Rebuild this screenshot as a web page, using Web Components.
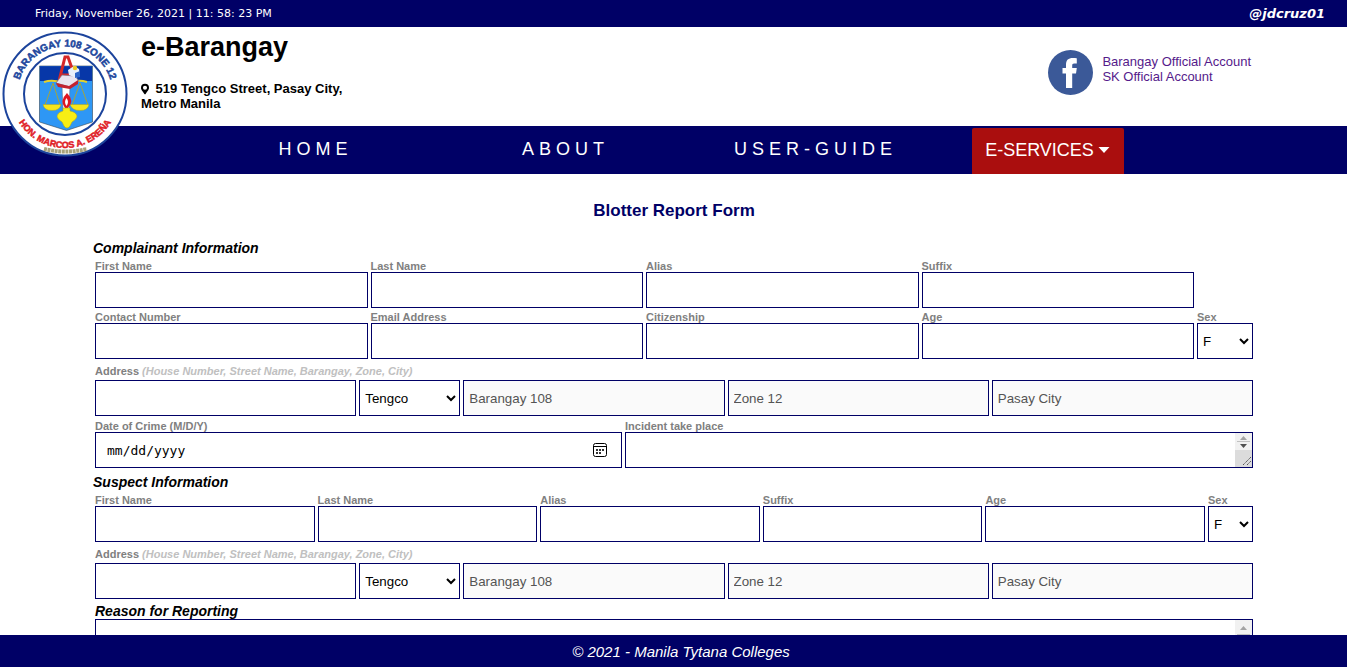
<!DOCTYPE html>
<html lang="en-US">
<head>
<meta charset="utf-8">
<title>e-Barangay - Blotter Report Form</title>
<style>
  body { margin: 0; background: #fff; color: #000; font-family: "Liberation Sans", Arial, sans-serif; }
</style>
</head>
<body>
<barangay-app></barangay-app>

<template id="tpl-app">
  <style>
    :host { display: flex; flex-direction: column; height: 100vh; }
    main { flex: 1; min-height: 0; overflow-y: auto; scrollbar-width: none; }
  </style>
  <top-bar>
    <time slot="date" datetime="2021-11-26T23:58:23">Friday, November 26, 2021 | 11: 58: 23 PM</time>
    <span slot="user">@jdcruz01</span>
  </top-bar>
  <site-header></site-header>
  <site-nav></site-nav>
  <main><blotter-form></blotter-form></main>
  <site-footer>© 2021 - Manila Tytana Colleges</site-footer>
</template>

<template id="tpl-topbar">
  <style>
    :host { display: flex; flex: none; justify-content: space-between; align-items: center; height: 27px; padding: 0 22px 0 35px; background: #006; color: #fff; font: 11px/15px "DejaVu Sans", Verdana, sans-serif; }
    a { color: inherit; text-decoration: none; font-size: 13px; font-weight: bold; font-style: italic; }
  </style>
  <slot name="date"></slot>
  <a href="#profile"><slot name="user"></slot></a>
</template>

<template id="tpl-header">
  <style>
    :host { display: flex; flex: none; justify-content: space-between; position: relative; z-index: 1; height: 99px; padding: 0 91px 0 141px; box-sizing: border-box; }
    barangay-seal { position: absolute; left: 2px; top: 4px; }
    h1 { margin: 5px 0 18px; font-size: 27px; line-height: 31px; }
    address { font-style: normal; font-weight: bold; font-size: 13px; line-height: 15px; width: 212px; }
    .pin { width: 8px; height: 12px; margin-right: 3px; vertical-align: -2px; }
    .social { display: flex; gap: 9px; padding: 23px 5px 0 0; font-size: 13px; line-height: 15px; }
    .social svg { width: 45px; height: 45px; }
    .links { display: flex; flex-direction: column; padding-top: 4px; }
    .links a { color: #551a8b; text-decoration: none; }
  </style>
  <barangay-seal></barangay-seal>
  <div>
    <h1>e-Barangay</h1>
    <address><svg class="pin" viewBox="0 0 384 512" aria-hidden="true"><path fill-rule="evenodd" d="M172 502C27 291 0 269 0 192a192 192 0 0 1 384 0c0 77-27 99-172 310-10 13-30 13-40 0zM192 290a98 98 0 1 0 0-196 98 98 0 0 0 0 196z"/></svg> 519 Tengco Street, Pasay City, Metro Manila</address>
  </div>
  <div class="social">
    <svg viewBox="0 0 45 45" aria-hidden="true"><circle cx="22.5" cy="22.5" r="22.5" fill="#3b5998"/><path fill="#fff" d="M18 38V23.500h-3.500V18H18v-3.200c0-4.800 2.400-6.800 6.800-6.800 1.800 0 3.200.1 4 .3v5.200h-2.600c-1.600 0-2 .8-2 2.200V18h4.600l-.8 5.500h-3.800V38z"/></svg>
    <div class="links"><a href="#barangay">Barangay Official Account</a><a href="#sk">SK Official Account</a></div>
  </div>
</template>

<template id="tpl-seal">
  <style>
    :host { display: block; width: 126px; height: 126px; }
    svg { display: block; width: 100%; height: 100%; }
    text { font-family: "Liberation Sans Narrow", "Liberation Sans", sans-serif; font-weight: bold; }
  </style>
  <svg viewBox="0 0 126 126" role="img" aria-label="Seal of Barangay 108 Zone 12">
    <defs>
      <path id="top" d="M15.500 63a47.500 47.500 0 0 1 95 0"/>
      <path id="bottom" d="M9 63a54 54 0 0 0 108 0"/>
    </defs>
    <circle cx="63" cy="63" r="61.500" fill="#fff" stroke="#1c449c" stroke-width="2"/>
    <circle cx="63" cy="63" r="41" fill="#fff" stroke="#1c449c" stroke-width="2"/>
    <text font-size="10" fill="#21479d" stroke="#21479d" stroke-width=".5" text-anchor="middle"><textPath href="#top" startOffset="50%">BARANGAY 108 ZONE 12</textPath></text>
    <text font-size="9" fill="#e01c26" stroke="#e01c26" stroke-width=".5" text-anchor="middle"><textPath href="#bottom" startOffset="50%">HON. MARCOS A. EREÑA</textPath></text>
    <path d="M42 118q21 5 43 0" fill="none" stroke="#a9a27a" stroke-width="4" stroke-dasharray="3 .6"/>
    <path d="M37.500 35h53v56l-26 8.500-27-8.500z" fill="#2e97f5" stroke="#345" stroke-width=".6"/>
    <path d="M38 35.300h52V50H38z" fill="#0737a8"/>
    <path d="M60 54h8l-1 25h-6z" fill="#fff" stroke="#567" stroke-width=".5"/>
    <path d="M42 51q9-3 18 1M85 51q-9-3-17 1" fill="none" stroke="#e3d12c" stroke-width="2"/>
    <path d="M51 52l-8 22M51 52l7 22M78 52l-8 22M78 52l8 22" fill="none" stroke="#a5a53c" stroke-width="1"/>
    <path d="M41 73.500h18q-1 6-9 6t-9-6zM68 73.500h19q-1 6-9 6t-10-6z" fill="#f6e51c" stroke="#a99a10" stroke-width=".4"/>
    <path d="M56 54l7-28h3l7 20M58 44h12" fill="none" stroke="#d62829" stroke-width="3"/>
    <path d="M54 52l6-8 13 1 4 5-9 6z" fill="#e9e5ef" stroke="#6c6680" stroke-width=".7"/>
    <path d="M54 52l13 3 9-6v4l-8 5-12-2z" fill="#c3222f"/>
    <path d="M66 39l6-4 5 3 1 6-4 3-7-3z" fill="#e8f0fa"/><circle cx="73" cy="37" r="2.200" fill="#edca25"/>
    <path d="M73 42l5-2v6l-5 1z" fill="#2b65c8"/>
    <path d="M65 62q8 8 1 15h-3q-6-7 2-15z" fill="#df1723"/><path d="M64.500 67q3 4 0 8-3-4 0-8z" fill="#fff"/>
    <path d="M61 77h7v3q6 1 7 5 0 3-5 6l-2 4q-3 4-6 0l-2-4q-5-3-5-6 1-4 6-5z" fill="#f8ee14" stroke="#b3a511" stroke-width=".5"/>
  </svg>
</template>

<template id="tpl-nav">
  <style>
    :host { display: block; flex: none; background: #006; }
    nav { display: grid; grid-template-columns: repeat(3, 250px) 214px; justify-content: center; align-items: center; height: 48px; padding-right: 2px; font-size: 18px; line-height: 20px; }
    a { justify-self: center; color: #fff; text-decoration: none; letter-spacing: 5px; padding-bottom: 2px; }
    button { justify-self: center; align-self: end; display: flex; align-items: center; justify-content: center; gap: 4px; width: 152px; height: 46px; padding: 0 0 2px; border: 0; border-radius: 2px 2px 0 0; background: #aa0e0e; color: #fff; font: inherit; }
    svg { width: 12px; height: 6px; }
  </style>
  <nav aria-label="Main">
    <a href="#home">HOME</a>
    <a href="#about">ABOUT</a>
    <a href="#guide">USER-GUIDE</a>
    <button type="button" aria-haspopup="true">E-SERVICES<svg viewBox="0 0 12 6" aria-hidden="true"><path fill="#fff" d="M.5 0h11L6 6z"/></svg></button>
  </nav>
</template>

<template id="tpl-footer">
  <style>
    :host { display: block; flex: none; padding: 8px 0 6px 15px; background: #006; color: #fff; text-align: center; font-size: 15px; line-height: 18px; font-style: italic; }
  </style>
  <slot></slot>
</template>

<template id="tpl-row">
  <style>
    :host { display: grid; gap: 3px; margin-top: 3px; }
    :host([layout="person"]) { grid-template-columns: repeat(4, 1fr) 56px; }
    :host([layout="suspect"]) { grid-template-columns: repeat(5, 1fr) 45px; }
    :host([layout="address"]) { grid-template-columns: 1fr 101px repeat(3, 1fr); }
    :host([layout="incident"]) { grid-template-columns: 527fr 628fr; margin-top: 4px; }
  </style>
  <slot></slot>
</template>

<template id="tpl-form">
  <style>
    :host { display: block; padding: 28px 94px 20px 95px; }
    h2 { margin: 0 0 20px; color: #006; font-size: 17px; line-height: 18px; text-align: center; }
    h3 { margin: 6px 0 4px -2px; font-size: 14px; line-height: 16px; font-style: italic; }
    h3 + form-row { margin-top: 0; }
    .caption { margin: 6px 0 0; color: #808080; font-size: 11px; line-height: 12px; font-weight: bold; }
    .caption em { color: #c0c0c0; }
    .reason { margin-top: 4px; }
  </style>
  <form>
    <h2>Blotter Report Form</h2>
    <h3>Complainant Information</h3>
    <form-row layout="person">
      <form-field label="First Name"></form-field>
      <form-field label="Last Name"></form-field>
      <form-field label="Alias"></form-field>
      <form-field label="Suffix"></form-field>
    </form-row>
    <form-row layout="person">
      <form-field label="Contact Number"></form-field>
      <form-field label="Email Address"></form-field>
      <form-field label="Citizenship"></form-field>
      <form-field label="Age"></form-field>
      <form-field label="Sex" kind="select" options="F,M"></form-field>
    </form-row>
    <p class="caption">Address <em>(House Number, Street Name, Barangay, Zone, City)</em></p>
    <form-row layout="address">
      <form-field name="House Number"></form-field>
      <form-field name="Street" kind="select" options="Tengco"></form-field>
      <form-field name="Barangay" value="Barangay 108"></form-field>
      <form-field name="Zone" value="Zone 12"></form-field>
      <form-field name="City" value="Pasay City"></form-field>
    </form-row>
    <form-row layout="incident">
      <form-field label="Date of Crime (M/D/Y)" kind="date"></form-field>
      <form-field label="Incident take place" kind="textarea"></form-field>
    </form-row>
    <h3>Suspect Information</h3>
    <form-row layout="suspect">
      <form-field label="First Name"></form-field>
      <form-field label="Last Name"></form-field>
      <form-field label="Alias"></form-field>
      <form-field label="Suffix"></form-field>
      <form-field label="Age"></form-field>
      <form-field label="Sex" kind="select" options="F,M"></form-field>
    </form-row>
    <p class="caption">Address <em>(House Number, Street Name, Barangay, Zone, City)</em></p>
    <form-row layout="address">
      <form-field name="House Number"></form-field>
      <form-field name="Street" kind="select" options="Tengco"></form-field>
      <form-field name="Barangay" value="Barangay 108"></form-field>
      <form-field name="Zone" value="Zone 12"></form-field>
      <form-field name="City" value="Pasay City"></form-field>
    </form-row>
    <form-field class="reason" label="Reason for Reporting" kind="textarea" heading></form-field>
  </form>
</template>

<template id="tpl-field">
  <style>
    :host { display: block; min-width: 0; }
    label { display: block; color: #808080; font-size: 11px; line-height: 12px; font-weight: bold; }
    :host([heading]) label { color: #000; font-size: 14px; line-height: 16px; font-style: italic; }
    input, select, .area { display: block; box-sizing: border-box; width: 100%; height: 36px; margin: 0; border: 1px solid #006; border-radius: 0; background: #fff; color: #000; }
    input, select, textarea { font-family: "Liberation Sans", Arial, sans-serif; outline: 0; }
    input { padding: 0 5px; }
    select { padding: 0 1px; }
    input:disabled { background: #fafafa; color: #545454; }
    input[type="date"] { padding: 0 14px 0 11px; font: 13px "DejaVu Sans Mono", monospace; }
    input::-webkit-datetime-edit-month-field, input::-webkit-datetime-edit-day-field, input::-webkit-datetime-edit-year-field { padding: 0; }
    input::-webkit-calendar-picker-indicator { width: 14px; height: 14px; padding: 0; margin: 0; opacity: 1; background: url("data:image/svg+xml,%3Csvg xmlns='http://www.w3.org/2000/svg' viewBox='0 0 14 14'%3E%3Crect x='.5' y='.5' width='13' height='13' rx='2' fill='none' stroke='%23000'/%3E%3Cpath d='M1 3.500h12' stroke='%23000'/%3E%3Cpath d='M3 6h2v2H3zM6 6h2v2H6zM9 6h2v2H9zM3 9h2v2H3zM6 9h2v2H6z' fill='%23333'/%3E%3C/svg%3E") center / 14px 14px no-repeat; }
    .area { display: flex; }
    :host([heading]) .area { height: 80px; }
    textarea { flex: 1; min-width: 0; border: 0; padding: 5px; resize: none; overflow: hidden; background: transparent; }
    .bar { flex: none; display: flex; flex-direction: column; width: 17px; background: #dcdcdc; }
    .bar svg { display: block; flex: none; width: 17px; height: 17px; }
    .bar .grip { margin-top: auto; }
    :host(:not([heading])) .bar .tall, :host([heading]) .bar .short { display: none; }
  </style>
</template>

<script>
  const define = (name, id, setup) => customElements.define(name, class extends HTMLElement {
    constructor() {
      super();
      this.attachShadow({ mode: "open" }).append(document.getElementById(id).content.cloneNode(true));
    }
    connectedCallback() { if (setup && !this.ready) { this.ready = true; setup(this, this.shadowRoot); } }
  });

  // Both arrows share one cell in a one-line area; a tall area shows the up arrow alone.
  const scrollBar = `<div class="bar" aria-hidden="true">
    <svg class="short" viewBox="0 0 17 17"><path fill="#f1f1f1" d="M0 0h17v17H0z"/><path fill="#a3a3a3" d="M5 7h7L8.500 3z"/><path fill="#c1c1c1" d="M2 8h13v1H2z"/><path fill="#505050" d="M5 11h7l-3.500 4z"/></svg>
    <svg class="tall" viewBox="0 0 17 17"><path fill="#f1f1f1" d="M0 0h17v17H0z"/><path fill="#a3a3a3" d="M5 10h7L8.500 6z"/><path fill="#c1c1c1" d="M2 14h13v1H2z"/></svg>
    <svg class="grip" viewBox="0 0 17 17"><path d="M8 15l8-8M12 15l4-4" fill="none" stroke="#555" stroke-dasharray="1.500 .5"/></svg></div>`;

  // Builds the control named by "kind" and ties the label to it.
  define("form-field", "tpl-field", (host, root) => {
    const kind = host.getAttribute("kind") || "text";
    const text = host.getAttribute("label");
    const tag = kind === "select" || kind === "textarea" ? kind : "input";
    const control = document.createElement(tag);
    control.id = "control";
    if (text) {
      const label = document.createElement("label");
      label.htmlFor = "control";
      label.textContent = text;
      root.append(label);
    } else {
      control.setAttribute("aria-label", host.getAttribute("name"));
    }
    if (kind === "select") {
      host.getAttribute("options").split(",").forEach(o => control.add(new Option(o)));
    } else if (tag === "input") {
      control.type = kind;
      if (host.hasAttribute("value")) { control.value = host.getAttribute("value"); control.disabled = true; }
    }
    if (kind === "textarea") {
      const area = document.createElement("div");
      area.className = "area";
      area.innerHTML = scrollBar;
      area.prepend(control);
      root.append(area);
    } else {
      root.append(control);
    }
  });
  define("form-row", "tpl-row");
  define("barangay-seal", "tpl-seal");
  define("top-bar", "tpl-topbar");
  define("site-header", "tpl-header");
  define("site-nav", "tpl-nav");
  define("site-footer", "tpl-footer");
  define("blotter-form", "tpl-form");
  define("barangay-app", "tpl-app");
</script>
</body>
</html>
